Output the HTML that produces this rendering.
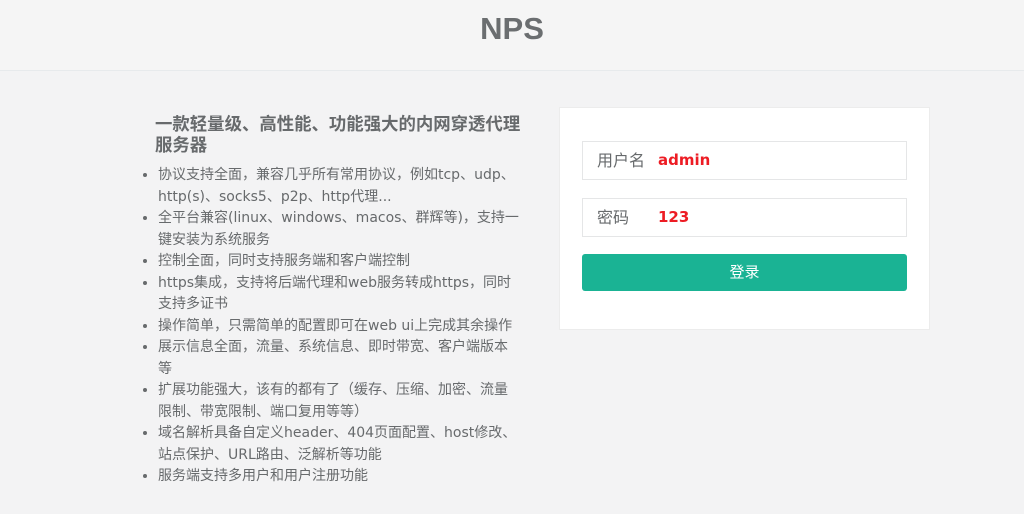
<!DOCTYPE html>
<html><head><meta charset="utf-8"><style>
body{margin:0;width:1024px;height:514px;background:#f3f3f4;font-family:"DejaVu Sans","Noto Sans CJK SC",sans-serif;color:#676a6c;overflow:hidden;position:relative}
.hd{position:absolute;left:0;top:0;width:1024px;height:70px;background:#f5f5f5;border-bottom:1px solid #e7eaec;text-align:center;font-size:31px;font-weight:bold;line-height:58px;color:#6b6e70;font-family:"Liberation Sans",sans-serif}
h3{position:absolute;left:155px;top:113px;width:390px;margin:0;font-size:17.4px;line-height:21px;font-weight:bold;font-family:"Noto Sans CJK SC",sans-serif;white-space:nowrap}
ul{position:absolute;left:140px;top:165px;width:390px;margin:0;padding:0 0 0 18px;font-size:14px;line-height:21.5px;white-space:nowrap}
.card{position:absolute;left:559px;top:107px;width:371px;height:223px;background:#fff;border:1px solid #ececec;box-sizing:border-box}
.in{position:absolute;left:22px;width:325px;height:39px;border:1px solid #e5e6e7;box-sizing:border-box;font-size:16px;line-height:37px}
.in span{position:absolute;left:14px;color:#676a6c}
.in b{position:absolute;left:75px;color:#ed1c24;font-size:15px}
.btn{position:absolute;left:22px;top:146px;width:325px;height:37px;background:#1ab394;border-radius:3px;color:#fff;text-align:center;line-height:37px;font-size:15px}
</style></head><body>
<div class="hd">NPS</div>
<h3>一款轻量级、高性能、功能强大的内网穿透代理<br>服务器</h3>
<ul>
<li>协议支持全面，兼容几乎所有常用协议，例如tcp、udp、<br>http(s)、socks5、p2p、http代理...</li>
<li>全平台兼容(linux、windows、macos、群辉等)，支持一<br>键安装为系统服务</li>
<li>控制全面，同时支持服务端和客户端控制</li>
<li>https集成，支持将后端代理和web服务转成https，同时<br>支持多证书</li>
<li>操作简单，只需简单的配置即可在web ui上完成其余操作</li>
<li>展示信息全面，流量、系统信息、即时带宽、客户端版本<br>等</li>
<li>扩展功能强大，该有的都有了（缓存、压缩、加密、流量<br>限制、带宽限制、端口复用等等）</li>
<li>域名解析具备自定义header、404页面配置、host修改、<br>站点保护、URL路由、泛解析等功能</li>
<li>服务端支持多用户和用户注册功能</li>
</ul>
<div class="card">
<div class="in" style="top:33px"><span>用户名</span><b>admin</b></div>
<div class="in" style="top:90px"><span>密码</span><b>123</b></div>
<div class="btn">登录</div>
</div>
</body></html>
